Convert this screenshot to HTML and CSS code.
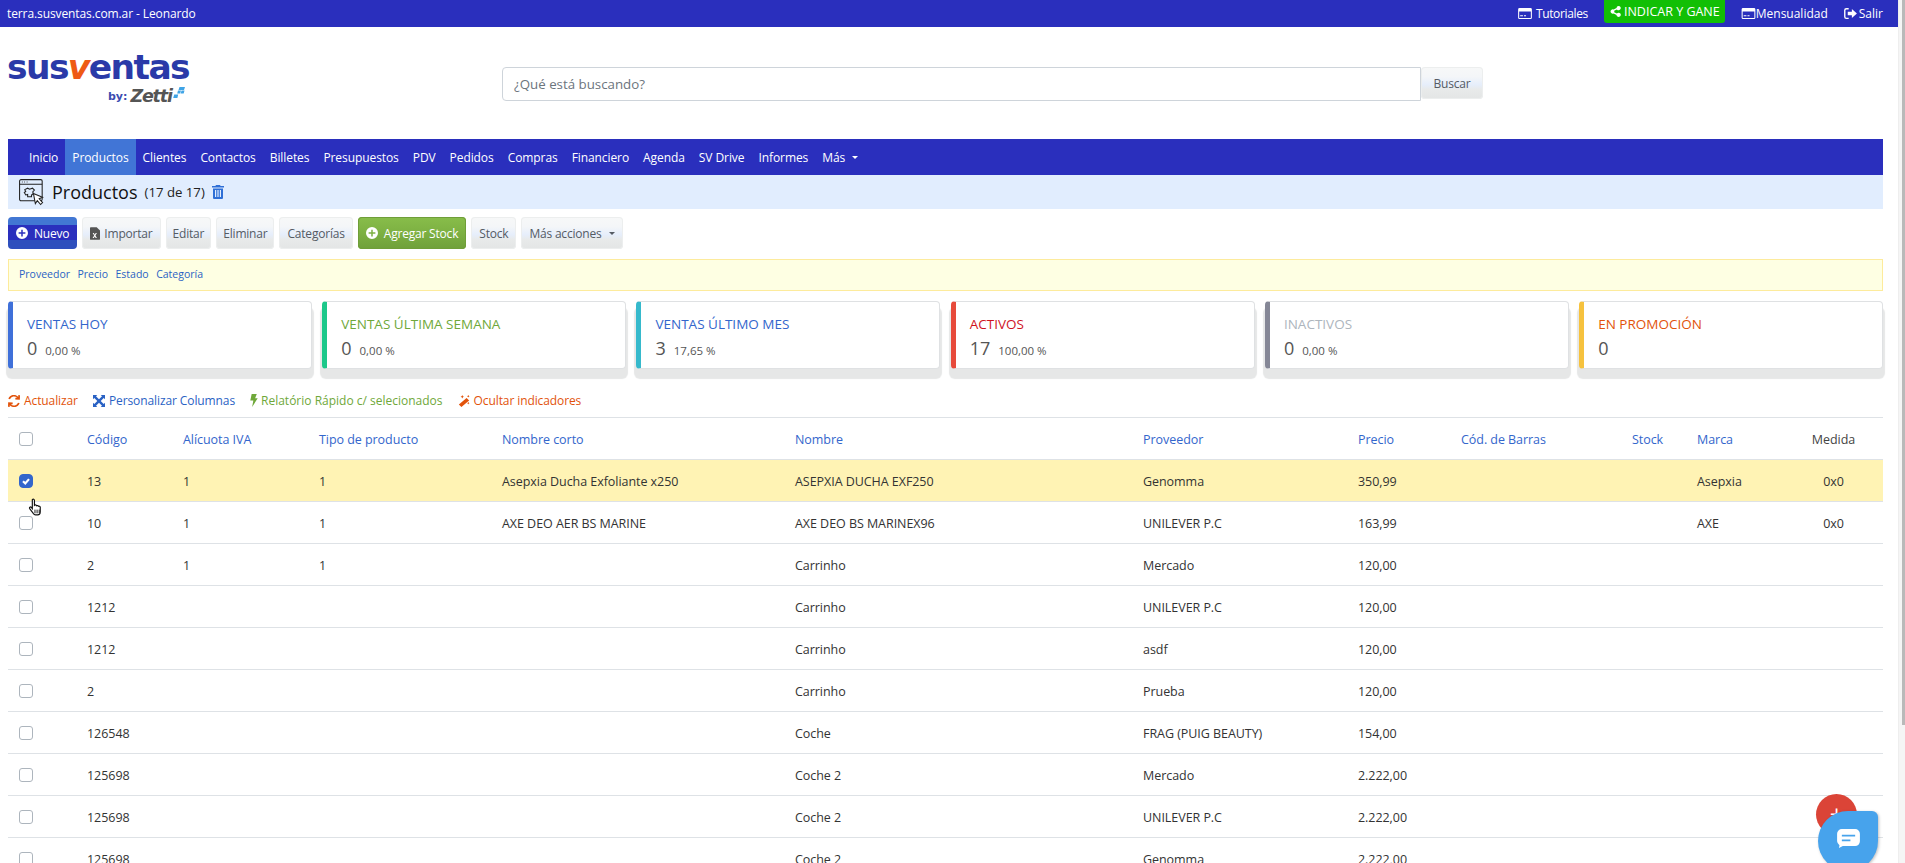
FILE: index.html
```html
<!DOCTYPE html>
<html lang="es">
<head>
<meta charset="utf-8">
<title>Productos</title>
<link rel="stylesheet" href="styles.css">
</head>
<body>
<svg class="defs" width="0" height="0" aria-hidden="true">
  <symbol id="i-card" viewBox="0 0 20 16"><path fill="currentColor" fill-rule="evenodd" d="M2 0h16a2 2 0 0 1 2 2v12a2 2 0 0 1-2 2H2a2 2 0 0 1-2-2V2a2 2 0 0 1 2-2zm-.5 5v9c0 .3.2.5.5.5h16c.3 0 .5-.2.5-.5V5zM3 10.500h4V12H3zm5.500 0h3V12h-3z"/></symbol>
  <symbol id="i-plus" viewBox="0 0 16 16"><path fill="currentColor" fill-rule="evenodd" d="M8 0a8 8 0 1 1 0 16A8 8 0 0 1 8 0zM7 3.500v3.500H3.500v2H7v3.500h2V9h3.500V7H9V3.500z"/></symbol>
</svg>
<div class="page">
  <main class="main">
    <header class="topbar">
      <span class="tenant">terra.susventas.com.ar - Leonardo</span>
      <nav class="toplinks">
        <a class="toplink tut"><svg class="i-top"><use href="#i-card"/></svg>Tutoriales</a>
        <a class="indicar"><svg class="i-share" viewBox="0 0 14 14"><path fill="currentColor" d="M11 0a2.700 2.700 0 1 1-2.200 4.300L5.300 6.100a2.700 2.700 0 0 1 0 1.800l3.500 1.800A2.700 2.700 0 1 1 8.300 11.300L4.600 9.400a2.700 2.700 0 1 1 0-4.800l3.700-1.900A2.700 2.700 0 0 1 11 0z"/></svg>INDICAR Y GANE</a>
        <a class="toplink men"><svg class="i-top"><use href="#i-card"/></svg>Mensualidad</a>
        <a class="toplink sal"><svg class="i-out" viewBox="0 0 14 12"><path fill="currentColor" d="M5 0v1.500H2.500c-.6 0-1 .4-1 1v7c0 .6.400 1 1 1H5V12H2.500A2.500 2.500 0 0 1 0 9.500v-7A2.500 2.500 0 0 1 2.500 0zM8.500 1L14 6l-5.500 5V8H4V4h4.500z"/></svg>Salir</a>
      </nav>
    </header>

    <section class="brandrow">
      <div class="logo">
        <div class="logo-word">sus<span class="logo-v">v</span>entas</div>
        <div class="logo-by"><span class="by">by:</span><span class="zetti">Zetti</span>
          <svg class="zetti-dots" viewBox="0 0 12 11"><path fill="#3fa4e6" d="M6.500 0H12l-1 3H5.500zM5 3.500h3l-.8 3H4.200zM8.500 3.500H11.500l-.8 3h-3zM1.200 7.500h4l-.8 3.500H.2z"/></svg>
        </div>
      </div>
      <form class="search">
        <div class="search-input">¿Qué está buscando?</div>
        <div class="btn btn-light search-btn">Buscar</div>
      </form>
    </section>

    <nav class="mainnav">
      <a class="nav-item">Inicio</a>
      <a class="nav-item active">Productos</a>
      <a class="nav-item">Clientes</a>
      <a class="nav-item">Contactos</a>
      <a class="nav-item">Billetes</a>
      <a class="nav-item">Presupuestos</a>
      <a class="nav-item">PDV</a>
      <a class="nav-item">Pedidos</a>
      <a class="nav-item">Compras</a>
      <a class="nav-item">Financiero</a>
      <a class="nav-item">Agenda</a>
      <a class="nav-item">SV Drive</a>
      <a class="nav-item">Informes</a>
      <a class="nav-item">Más<span class="caret caret-nav"></span></a>
    </nav>

    <div class="titlebar">
      <svg class="i-title" viewBox="0 0 26 28"><g fill="none" stroke="#222" stroke-width="1.100"><rect x=".6" y=".6" width="23.500" height="22" rx="1.500"/><path d="M.6 5.500h23.500M3 3h.8M5.500 3h.8M8 3h.8"/><path d="M6 11l3-1.500 2 1 3-1 2 2-1.500 1.500v3l-1.500.5v2H9v-2.500l-2 .5-1.500-2.500 1.500-1z"/><path fill="#fff" d="M15 15l9.500 4-3.500 1.500 3.500 4-2 2-3.500-4-2 3z"/></g></svg>
      <h1 class="title">Productos</h1>
      <span class="title-count">(17 de 17)</span>
      <svg class="i-trash" viewBox="0 0 12 14"><path fill="#2f6fd6" fill-rule="evenodd" d="M4 0h4l.6 1H12v1.500H0V1h3.400zM1 3.500h10V13a1 1 0 0 1-1 1H2a1 1 0 0 1-1-1zM3 5v7h1.200V5zm2.400 0v7h1.200V5zm2.400 0v7H9V5z"/></svg>
    </div>

    <div class="toolbar">
      <a class="btn btn-blue"><svg class="i-btn"><use href="#i-plus"/></svg>Nuevo</a>
      <a class="btn btn-light"><svg class="i-xls" viewBox="0 0 12 15"><path fill="#555" d="M1 0h7l4 4v10a1 1 0 0 1-1 1H1a1 1 0 0 1-1-1V1a1 1 0 0 1 1-1z"/><path fill="#fff" d="M3.200 7h1.500l1 1.900L6.800 7h1.500L6.500 10l1.800 3H6.800l-1.100-2-1.100 2H3.100l1.900-3z"/></svg>Importar</a>
      <a class="btn btn-light btn-tight">Editar</a>
      <a class="btn btn-light btn-tight">Eliminar</a>
      <a class="btn btn-light">Categorías</a>
      <a class="btn btn-green"><svg class="i-btn"><use href="#i-plus"/></svg>Agregar Stock</a>
      <a class="btn btn-light">Stock</a>
      <a class="btn btn-light">Más acciones<span class="caret caret-btn"></span></a>
    </div>

    <div class="filters">
      <a>Proveedor</a><a>Precio</a><a>Estado</a><a>Categoría</a>
    </div>

    <section class="cards">
      <div class="card c-blue"><div class="card-title">VENTAS HOY</div><div class="card-val">0<small>0,00 %</small></div></div>
      <div class="card c-green"><div class="card-title">VENTAS ÚLTIMA SEMANA</div><div class="card-val">0<small>0,00 %</small></div></div>
      <div class="card c-cyan"><div class="card-title">VENTAS ÚLTIMO MES</div><div class="card-val">3<small>17,65 %</small></div></div>
      <div class="card c-red"><div class="card-title">ACTIVOS</div><div class="card-val">17<small>100,00 %</small></div></div>
      <div class="card c-gray"><div class="card-title">INACTIVOS</div><div class="card-val">0<small>0,00 %</small></div></div>
      <div class="card c-yellow"><div class="card-title">EN PROMOCIÓN</div><div class="card-val">0</div></div>
    </section>

    <div class="actions">
      <a class="act a-orange"><svg class="i-act" viewBox="0 0 14 14"><path fill="currentColor" d="M12 0l2 .2-.2 5.300-5.300-.3.100-2 2 .1A5 5 0 0 0 2.300 5L.4 4.300A7 7 0 0 1 12 2zM2 14l-2-.2.2-5.300 5.300.3-.1 2-2-.1A5 5 0 0 0 11.700 9l1.900.7A7 7 0 0 1 2 12z"/></svg>Actualizar</a>
      <a class="act a-blue"><svg class="i-act" viewBox="0 0 14 14"><path fill="currentColor" d="M0 0h5L3.500 1.500 7 5l3.500-3.500L9 0h5v5l-1.500-1.500L9 7l3.500 3.500L14 9v5H9l1.500-1.500L7 9l-3.500 3.500L5 14H0V9l1.500 1.500L5 7 1.500 3.500 0 5z"/></svg>Personalizar Columnas</a>
      <a class="act a-green"><svg class="i-bolt" viewBox="0 0 8 14"><path fill="currentColor" d="M1.500 0H7L5.200 4.500H8L2 14l1.300-7H0z"/></svg>Relatório Rápido c/ selecionados</a>
      <a class="act a-orange"><svg class="i-act" viewBox="0 0 14 14"><path fill="currentColor" d="M10 3.500l3 3L4 14l-3-3zM5 0l.7 1.500L7 2l-1.300.7L5 4l-.7-1.300L3 2l1.300-.5zM12 0l.5 1 1 .5-1 .5-.5 1-.5-1-1-.5 1-.5zM12 8l.5 1 1 .5-1 .5-.5 1-.5-1-1-.5 1-.5z"/></svg>Ocultar indicadores</a>
    </div>

    <table class="grid">
      <colgroup>
        <col class="w-check"><col class="w-cod"><col class="w-iva"><col class="w-tipo"><col class="w-corto"><col class="w-nombre"><col class="w-prov"><col class="w-precio"><col class="w-barras"><col class="w-stock"><col class="w-marca"><col class="w-medida">
      </colgroup>
      <thead>
        <tr><th><span class="chk"></span></th><th>Código</th><th>Alícuota IVA</th><th>Tipo de producto</th><th>Nombre corto</th><th>Nombre</th><th>Proveedor</th><th>Precio</th><th>Cód. de Barras</th><th>Stock</th><th>Marca</th><th class="medida">Medida</th></tr>
      </thead>
      <tbody>
        <tr class="selected"><td><span class="chk on"><svg viewBox="0 0 10 10"><path fill="none" stroke="#fff" stroke-width="1.800" d="M2.500 5.200l1.900 1.800L7.500 3.400"/></svg></span></td><td>13</td><td>1</td><td>1</td><td>Asepxia Ducha Exfoliante x250</td><td>ASEPXIA DUCHA EXF250</td><td>Genomma</td><td>350,99</td><td></td><td></td><td>Asepxia</td><td class="ctr">0x0</td></tr>
        <tr><td><span class="chk"></span></td><td>10</td><td>1</td><td>1</td><td>AXE DEO AER BS MARINE</td><td>AXE DEO BS MARINEX96</td><td>UNILEVER P.C</td><td>163,99</td><td></td><td></td><td>AXE</td><td class="ctr">0x0</td></tr>
        <tr><td><span class="chk"></span></td><td>2</td><td>1</td><td>1</td><td></td><td>Carrinho</td><td>Mercado</td><td>120,00</td><td></td><td></td><td></td><td></td></tr>
        <tr><td><span class="chk"></span></td><td>1212</td><td></td><td></td><td></td><td>Carrinho</td><td>UNILEVER P.C</td><td>120,00</td><td></td><td></td><td></td><td></td></tr>
        <tr><td><span class="chk"></span></td><td>1212</td><td></td><td></td><td></td><td>Carrinho</td><td>asdf</td><td>120,00</td><td></td><td></td><td></td><td></td></tr>
        <tr><td><span class="chk"></span></td><td>2</td><td></td><td></td><td></td><td>Carrinho</td><td>Prueba</td><td>120,00</td><td></td><td></td><td></td><td></td></tr>
        <tr><td><span class="chk"></span></td><td>126548</td><td></td><td></td><td></td><td>Coche</td><td>FRAG (PUIG BEAUTY)</td><td>154,00</td><td></td><td></td><td></td><td></td></tr>
        <tr><td><span class="chk"></span></td><td>125698</td><td></td><td></td><td></td><td>Coche 2</td><td>Mercado</td><td>2.222,00</td><td></td><td></td><td></td><td></td></tr>
        <tr><td><span class="chk"></span></td><td>125698</td><td></td><td></td><td></td><td>Coche 2</td><td>UNILEVER P.C</td><td>2.222,00</td><td></td><td></td><td></td><td></td></tr>
        <tr><td><span class="chk"></span></td><td>125698</td><td></td><td></td><td></td><td>Coche 2</td><td>Genomma</td><td>2.222,00</td><td></td><td></td><td></td><td></td></tr>
      </tbody>
    </table>
  </main>
  <aside class="scrollbar"><div class="thumb"></div></aside>
</div>

<svg class="cursor" viewBox="0 0 14 18"><path fill="#fff" stroke="#111" stroke-width="1.100" d="M4 1.500c.8-.8 2-.4 2 .8V7l.5-.3c.7-.3 1.300 0 1.500.6.700-.4 1.500-.2 1.700.5.700-.3 1.500 0 1.800.8v4.400c0 1.800-1 3-2.500 3H7c-1 0-1.700-.7-2.300-1.600L1.500 10c-.6-1 .6-2 1.500-1.200L4 10V2z"/><path stroke="#111" stroke-width=".9" d="M6.500 11v3.500M8.500 11v3.500M10.500 11v3.500"/></svg>
<div class="fab-red"><span class="fab-plus">+</span></div>
<div class="chat"><svg viewBox="0 0 24 20"><path fill="#fff" d="M5 0h14a5 5 0 0 1 5 5v8a5 5 0 0 1-5 5H6l-4 2 .5-3A5 5 0 0 1 0 13V5a5 5 0 0 1 5-5z"/><path stroke="#47a3ec" stroke-width="2" d="M5 7h14M5 12h9"/></svg></div>
</body>
</html>
```
FILE: styles.css
```css
* { box-sizing: border-box; }
html, body { margin: 0; height: 100%; overflow: hidden; background: #fff; }
body { font-family: "Open Sans", "Noto Sans", sans-serif; font-size: 12px; color: #333; }
a { color: inherit; text-decoration: none; }
.defs { position: absolute; }
.page { display: flex; height: 863px; }
.main { flex: 0 0 1898px; width: 1898px; overflow: hidden; }
.scrollbar { flex: 1; background: #f5f5f5; border-left: 1px solid #eee; padding-left: 3px; }
.thumb { width: 3px; height: 725px; background: #b9b9b9; }

.topbar { height: 27px; background: #2a2fbd; color: #fff; display: flex; align-items: center; justify-content: space-between; padding: 0 15px 0 7px; }
.tenant { font-size: 12px; letter-spacing: -.1px; }
.toplinks { display: flex; align-items: flex-start; height: 27px; }
.toplink { display: flex; align-items: center; font-size: 12px; height: 27px; }
.i-top { width: 14px; height: 11px; margin-right: 4px; }
.men .i-top { margin-right: 0; width: 15px; }
.tut { margin-right: 16px; letter-spacing: -.35px; }
.men { margin-right: 16px; }
.indicar { height: 23px; background: #12bf05; color: #fff; border-radius: 0 0 3px 3px; display: flex; align-items: center; padding: 0 5px 0 6px; font-size: 12.5px; margin-right: 16px; }
.i-share { width: 11px; height: 11px; margin-right: 3px; }
.i-out { width: 13px; height: 11px; margin-right: 2px; }

.brandrow { height: 112px; display: flex; padding-left: 7px; }
.logo { width: 495px; padding-top: 25px; }
.logo-word { font-family: "DejaVu Sans", sans-serif; font-weight: 700; font-size: 34.5px; line-height: 30px; color: #2a3aa8; letter-spacing: -1.6px; }
.logo-v { color: #ee5a14; font-style: italic; }
.logo-by { display: flex; align-items: center; padding-left: 101px; height: 24px; position: relative; margin-top: 2px; }
.by { font-family: "DejaVu Sans", sans-serif; font-weight: 700; font-size: 11px; color: #3c4cb0; margin-right: 3px; }
.zetti { font-family: "DejaVu Sans", sans-serif; font-weight: 700; font-style: italic; font-size: 17.5px; color: #555; letter-spacing: -1.2px; }
.zetti-dots { width: 12px; height: 11px; position: absolute; left: 166px; top: 3px; }
.search { display: flex; width: 981px; height: 34px; margin-top: 40px; }
.search-input { flex: 1; border: 1px solid #ced4da; border-radius: 4px 0 0 4px; color: #6c757d; font-size: 13.3px; padding: 0 11px; display: flex; align-items: center; }
.search-btn { height: 34px; padding: 1px 0 0; width: 62px; justify-content: center; border-radius: 0 4px 4px 0; font-size: 12.5px; letter-spacing: 0; }

.mainnav { height: 36px; margin-left: 8px; width: 1875px; background: #2a2fbd; color: #fff; display: flex; padding-left: 14px; }
.nav-item { padding: 0 7px; display: flex; align-items: center; font-size: 12px; letter-spacing: -.08px; }
.nav-item.active { background: #4175d6; }
.caret { display: inline-block; border-left: 3.5px solid transparent; border-right: 3.5px solid transparent; border-top: 3px solid currentColor; vertical-align: middle; }
.caret-nav { margin-left: 7px; }
.caret-btn { margin-left: 7px; }

.titlebar { height: 34px; margin-left: 8px; width: 1875px; background: #e1edfe; display: flex; align-items: center; padding-left: 11px; }
.i-title { width: 25px; height: 27px; margin-right: 8px; }
.title { margin: 0; font-weight: 400; font-size: 18px; color: #111; margin-right: 7px; }
.title-count { font-size: 13.2px; color: #222; margin-right: 7px; }
.i-trash { width: 12px; height: 14px; }

.toolbar { display: flex; gap: 5px; margin: 8px 0 0 8px; height: 32px; }
.btn { display: inline-flex; align-items: center; height: 32px; padding: 0 8px; border-radius: 4px; font-size: 12px; letter-spacing: -.2px; }
.btn-tight { padding: 0 7px; }
.btn-light { background: linear-gradient(#f7f8f8 0, #f4f6f8 30%, #e6eefb 55%, #e8eaea 70%, #e3e5e5 100%); color: #555b63; box-shadow: inset 0 0 0 1px #eceeee; }
.btn-blue { background: linear-gradient(#4277d3 0, #4277d3 25%, #2a2fbd 26%, #2a2fbd 72%, #2e4fbd 73%, #2e4fbd 100%); color: #fff; }
.btn-green { background: linear-gradient(#88bd4a 0, #7fb344 40%, #6fa03a 100%); color: #fff; box-shadow: inset 0 0 0 1px #6f9e38; }
.i-btn { width: 12px; height: 12px; margin-right: 6px; }
.i-xls { width: 10px; height: 13px; margin-right: 4px; }

.filters { margin: 10px 0 0 8px; width: 1875px; height: 32px; background: #feffe3; border: 1px solid #fdeb9c; display: flex; align-items: center; gap: 7.5px; padding: 0 0 2px 10px; font-size: 10.5px; color: #2a62c4; }

.cards { display: grid; grid-template-columns: repeat(6, 1fr); gap: 10.4px; margin: 10px 0 0 8px; width: 1875px; }
.card { height: 68px; background: #fff; border: 1px solid #dfe1e3; border-left-width: 5px; border-radius: 4px; padding: 13px 0 0 14px; box-shadow: 0 8px 1px 2px #e6e7e7; }
.card-title { font-size: 13.5px; line-height: 18px; }
.card-val { font-size: 18px; line-height: 24px; color: #555; margin-top: 3px; display: flex; align-items: baseline; }
.card-val small { font-size: 11.5px; margin-left: 8px; line-height: 22px; }
.c-blue { border-left-color: #3f70d9; } .c-blue .card-title { color: #3366cc; }
.c-green { border-left-color: #1cc88a; } .c-green .card-title { color: #6fa83a; }
.c-cyan { border-left-color: #36b9cc; } .c-cyan .card-title { color: #3366cc; }
.c-red { border-left-color: #e74a3b; } .c-red .card-title { color: #d0121e; }
.c-gray { border-left-color: #858796; } .c-gray .card-title { color: #adb5bd; }
.c-yellow { border-left-color: #f6c23e; } .c-yellow .card-title { color: #e2530b; }

.actions { display: flex; gap: 15px; margin: 23px 0 0 8px; height: 17px; align-items: center; font-size: 12px; letter-spacing: -.1px; }
.act { display: flex; align-items: center; }
.i-act { width: 12px; height: 12px; margin-right: 4px; }
.i-bolt { width: 8px; height: 13px; margin-right: 3px; }
.a-orange { color: #e2530b; }
.a-blue { color: #2a62c4; }
.a-green { color: #6fa83a; letter-spacing: 0; }

.grid { border-collapse: collapse; table-layout: fixed; width: 1875px; margin: 8px 0 0 8px; font-size: 12.5px; }
.w-check { width: 67px; } .w-cod { width: 96px; } .w-iva { width: 136px; } .w-tipo { width: 183px; } .w-corto { width: 293px; } .w-nombre { width: 348px; } .w-prov { width: 215px; } .w-precio { width: 103px; } .w-barras { width: 171px; } .w-stock { width: 65px; } .w-marca { width: 97px; } .w-medida { width: 101px; }
.grid th, .grid td { height: 42px; padding: 2px 0 0 12px; border-top: 1px solid #dee2e6; text-align: left; font-weight: 400; white-space: nowrap; letter-spacing: -.05px; }
.grid th { color: #3366cc; }
.grid th:first-child, .grid td:first-child { padding: 0 0 0 11px; }
.grid th.medida { color: #444; text-align: center; padding: 2px 0 0 2px; }
.grid td.ctr { text-align: center; padding: 2px 0 0 2px; }
.grid td { color: #333; }
.selected td { background: #fff3b4; }
.chk { display: block; width: 14px; height: 14px; border: 1px solid #adb5bd; border-radius: 3px; background: #fff; }
.chk.on { background: #3366cc; border-color: #3366cc; border-radius: 4px; }
.chk svg { display: block; width: 12px; height: 12px; }

.cursor { position: absolute; left: 27px; top: 498px; width: 17px; height: 19px; }
.fab-red { position: absolute; left: 1816px; top: 794px; width: 41px; height: 41px; border-radius: 50%; background: #db4437; color: #fff; text-align: center; }
.fab-plus { font-size: 24px; line-height: 40px; }
.chat { position: absolute; left: 1818px; top: 811px; width: 60px; height: 60px; background: #47a3ec; border-radius: 50% 6px 50% 50%; box-shadow: 1px 1px 3px rgba(0,0,0,.25); display: flex; align-items: center; justify-content: center; }
.chat svg { width: 23px; height: 19px; margin-top: -6px; }
```
